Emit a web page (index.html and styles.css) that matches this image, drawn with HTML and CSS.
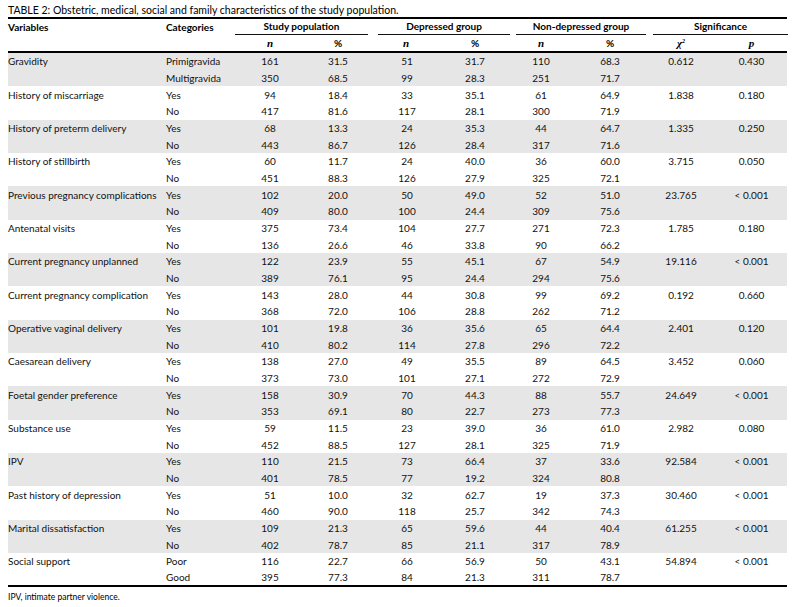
FILE: index.html
```html
<!DOCTYPE html>
<html>
<head>
<meta charset="utf-8">
<link rel="stylesheet" href="styles.css">
</head>
<body>
<div class="page">
  <div class="title">TABLE 2: Obstetric, medical, social and family characteristics of the study population.</div>
  <table class="tbl">
    <colgroup>
      <col class="c-var"><col class="c-cat"><col class="c-n1"><col class="c-p1"><col class="c-n2"><col class="c-p2"><col class="c-n3"><col class="c-p3"><col class="c-chi"><col class="c-p">
    </colgroup>
    <thead>
      <tr class="h1">
        <th class="left">Variables</th>
        <th class="left">Categories</th>
        <th colspan="2"><div class="grp g-study">Study population</div></th>
        <th colspan="2"><div class="grp g-dep">Depressed group</div></th>
        <th colspan="2"><div class="grp g-non">Non-depressed group</div></th>
        <th colspan="2"><div class="grp g-sig">Significance</div></th>
      </tr>
      <tr class="h2">
        <th></th><th></th>
        <th><span class="it">n</span></th><th>%</th>
        <th class="shift"><span class="it">n</span></th><th>%</th>
        <th><span class="it">n</span></th><th>%</th>
        <th><span class="it">χ<sup>2</sup></span></th><th><span class="it">p</span></th>
      </tr>
    </thead>
    <tbody>
      <tr class="g"><td>Gravidity</td><td>Primigravida</td><td>161</td><td>31.5</td><td>51</td><td>31.7</td><td>110</td><td>68.3</td><td>0.612</td><td>0.430</td></tr>
      <tr class="g"><td></td><td>Multigravida</td><td>350</td><td>68.5</td><td>99</td><td>28.3</td><td>251</td><td>71.7</td><td></td><td></td></tr>
      <tr><td>History of miscarriage</td><td>Yes</td><td>94</td><td>18.4</td><td>33</td><td>35.1</td><td>61</td><td>64.9</td><td>1.838</td><td>0.180</td></tr>
      <tr><td></td><td>No</td><td>417</td><td>81.6</td><td>117</td><td>28.1</td><td>300</td><td>71.9</td><td></td><td></td></tr>
      <tr class="g"><td>History of preterm delivery</td><td>Yes</td><td>68</td><td>13.3</td><td>24</td><td>35.3</td><td>44</td><td>64.7</td><td>1.335</td><td>0.250</td></tr>
      <tr class="g"><td></td><td>No</td><td>443</td><td>86.7</td><td>126</td><td>28.4</td><td>317</td><td>71.6</td><td></td><td></td></tr>
      <tr><td>History of stillbirth</td><td>Yes</td><td>60</td><td>11.7</td><td>24</td><td>40.0</td><td>36</td><td>60.0</td><td>3.715</td><td>0.050</td></tr>
      <tr><td></td><td>No</td><td>451</td><td>88.3</td><td>126</td><td>27.9</td><td>325</td><td>72.1</td><td></td><td></td></tr>
      <tr class="g"><td>Previous pregnancy complications</td><td>Yes</td><td>102</td><td>20.0</td><td>50</td><td>49.0</td><td>52</td><td>51.0</td><td>23.765</td><td>&lt; 0.001</td></tr>
      <tr class="g"><td></td><td>No</td><td>409</td><td>80.0</td><td>100</td><td>24.4</td><td>309</td><td>75.6</td><td></td><td></td></tr>
      <tr><td>Antenatal visits</td><td>Yes</td><td>375</td><td>73.4</td><td>104</td><td>27.7</td><td>271</td><td>72.3</td><td>1.785</td><td>0.180</td></tr>
      <tr><td></td><td>No</td><td>136</td><td>26.6</td><td>46</td><td>33.8</td><td>90</td><td>66.2</td><td></td><td></td></tr>
      <tr class="g"><td>Current pregnancy unplanned</td><td>Yes</td><td>122</td><td>23.9</td><td>55</td><td>45.1</td><td>67</td><td>54.9</td><td>19.116</td><td>&lt; 0.001</td></tr>
      <tr class="g"><td></td><td>No</td><td>389</td><td>76.1</td><td>95</td><td>24.4</td><td>294</td><td>75.6</td><td></td><td></td></tr>
      <tr><td>Current pregnancy complication</td><td>Yes</td><td>143</td><td>28.0</td><td>44</td><td>30.8</td><td>99</td><td>69.2</td><td>0.192</td><td>0.660</td></tr>
      <tr><td></td><td>No</td><td>368</td><td>72.0</td><td>106</td><td>28.8</td><td>262</td><td>71.2</td><td></td><td></td></tr>
      <tr class="g"><td>Operative vaginal delivery</td><td>Yes</td><td>101</td><td>19.8</td><td>36</td><td>35.6</td><td>65</td><td>64.4</td><td>2.401</td><td>0.120</td></tr>
      <tr class="g"><td></td><td>No</td><td>410</td><td>80.2</td><td>114</td><td>27.8</td><td>296</td><td>72.2</td><td></td><td></td></tr>
      <tr><td>Caesarean delivery</td><td>Yes</td><td>138</td><td>27.0</td><td>49</td><td>35.5</td><td>89</td><td>64.5</td><td>3.452</td><td>0.060</td></tr>
      <tr><td></td><td>No</td><td>373</td><td>73.0</td><td>101</td><td>27.1</td><td>272</td><td>72.9</td><td></td><td></td></tr>
      <tr class="g"><td>Foetal gender preference</td><td>Yes</td><td>158</td><td>30.9</td><td>70</td><td>44.3</td><td>88</td><td>55.7</td><td>24.649</td><td>&lt; 0.001</td></tr>
      <tr class="g"><td></td><td>No</td><td>353</td><td>69.1</td><td>80</td><td>22.7</td><td>273</td><td>77.3</td><td></td><td></td></tr>
      <tr><td>Substance use</td><td>Yes</td><td>59</td><td>11.5</td><td>23</td><td>39.0</td><td>36</td><td>61.0</td><td>2.982</td><td>0.080</td></tr>
      <tr><td></td><td>No</td><td>452</td><td>88.5</td><td>127</td><td>28.1</td><td>325</td><td>71.9</td><td></td><td></td></tr>
      <tr class="g"><td>IPV</td><td>Yes</td><td>110</td><td>21.5</td><td>73</td><td>66.4</td><td>37</td><td>33.6</td><td>92.584</td><td>&lt; 0.001</td></tr>
      <tr class="g"><td></td><td>No</td><td>401</td><td>78.5</td><td>77</td><td>19.2</td><td>324</td><td>80.8</td><td></td><td></td></tr>
      <tr><td>Past history of depression</td><td>Yes</td><td>51</td><td>10.0</td><td>32</td><td>62.7</td><td>19</td><td>37.3</td><td>30.460</td><td>&lt; 0.001</td></tr>
      <tr><td></td><td>No</td><td>460</td><td>90.0</td><td>118</td><td>25.7</td><td>342</td><td>74.3</td><td></td><td></td></tr>
      <tr class="g"><td>Marital dissatisfaction</td><td>Yes</td><td>109</td><td>21.3</td><td>65</td><td>59.6</td><td>44</td><td>40.4</td><td>61.255</td><td>&lt; 0.001</td></tr>
      <tr class="g"><td></td><td>No</td><td>402</td><td>78.7</td><td>85</td><td>21.1</td><td>317</td><td>78.9</td><td></td><td></td></tr>
      <tr><td>Social support</td><td>Poor</td><td>116</td><td>22.7</td><td>66</td><td>56.9</td><td>50</td><td>43.1</td><td>54.894</td><td>&lt; 0.001</td></tr>
      <tr><td></td><td>Good</td><td>395</td><td>77.3</td><td>84</td><td>21.3</td><td>311</td><td>78.7</td><td></td><td></td></tr>
    </tbody>
  </table>
  <div class="foot">IPV, intimate partner violence.</div>
</div>
</body>
</html>
```

FILE: styles.css
```css
html, body {
  margin: 0;
  padding: 0;
  background: #ffffff;
}

.page {
  padding: 3px 10px 0 8px;
  font-family: Lato, "Open Sans", "Liberation Sans", sans-serif;
  color: #111;
}

.title {
  font-size: 10.5px;
  line-height: 14px;
  height: 14px;
  white-space: nowrap;
  color: #000;
}

.tbl {
  width: 779px;
  table-layout: fixed;
  border-collapse: separate;
  border-spacing: 0;
  font-size: 10px;
}

.c-var { width: 158px; }
.c-cat { width: 70px; }
.c-n1 { width: 68px; }
.c-p1 { width: 68px; }
.c-n2 { width: 70px; }
.c-p2 { width: 66px; }
.c-n3 { width: 66px; }
.c-p3 { width: 72px; }
.c-chi { width: 70px; }
.c-p { width: 71px; }

.tbl th, .tbl td {
  padding: 0;
  white-space: nowrap;
  text-align: center;
}

.tbl td:nth-child(1), .tbl td:nth-child(2), .tbl th.left {
  text-align: left;
}

.tbl thead th {
  font-weight: 700;
  color: #000;
}

.h1 th {
  border-top: 2px solid #000;
  height: 16px;
  vertical-align: bottom;
  line-height: 15px;
}

.h1 th.left {
  vertical-align: middle;
}

.grp {
  border-bottom: 1px solid #111;
  line-height: 15px;
  text-align: center;
}

.g-study { margin: 0 4px 0 -1px; }
.g-dep { margin: 0 -2px 0 6px; }
.g-non { margin: 0 0 0 8px; }
.g-sig { margin: 0 -1px 0 7px; }

.h2 th {
  height: 16px;
  line-height: 16px;
  border-bottom: 2px solid #000;
}

.h2 th.shift {
  padding-right: 2px;
}

.it {
  font-family: "Liberation Serif", serif;
  font-style: italic;
  font-weight: 700;
  font-size: 11px;
}

.it sup {
  font-size: 6px;
  vertical-align: 4px;
  line-height: 0;
}

.tbl tbody tr {
  height: 16.68px;
}

.tbl tbody td {
  line-height: 12px;
  vertical-align: middle;
}

.tbl tbody tr.g td {
  background: #e6e6e6;
}

.tbl tbody tr:last-child td {
  border-bottom: 2px solid #000;
}

.foot {
  font-size: 8.5px;
  line-height: 12px;
  margin-top: 4px;
  color: #000;
}
```
